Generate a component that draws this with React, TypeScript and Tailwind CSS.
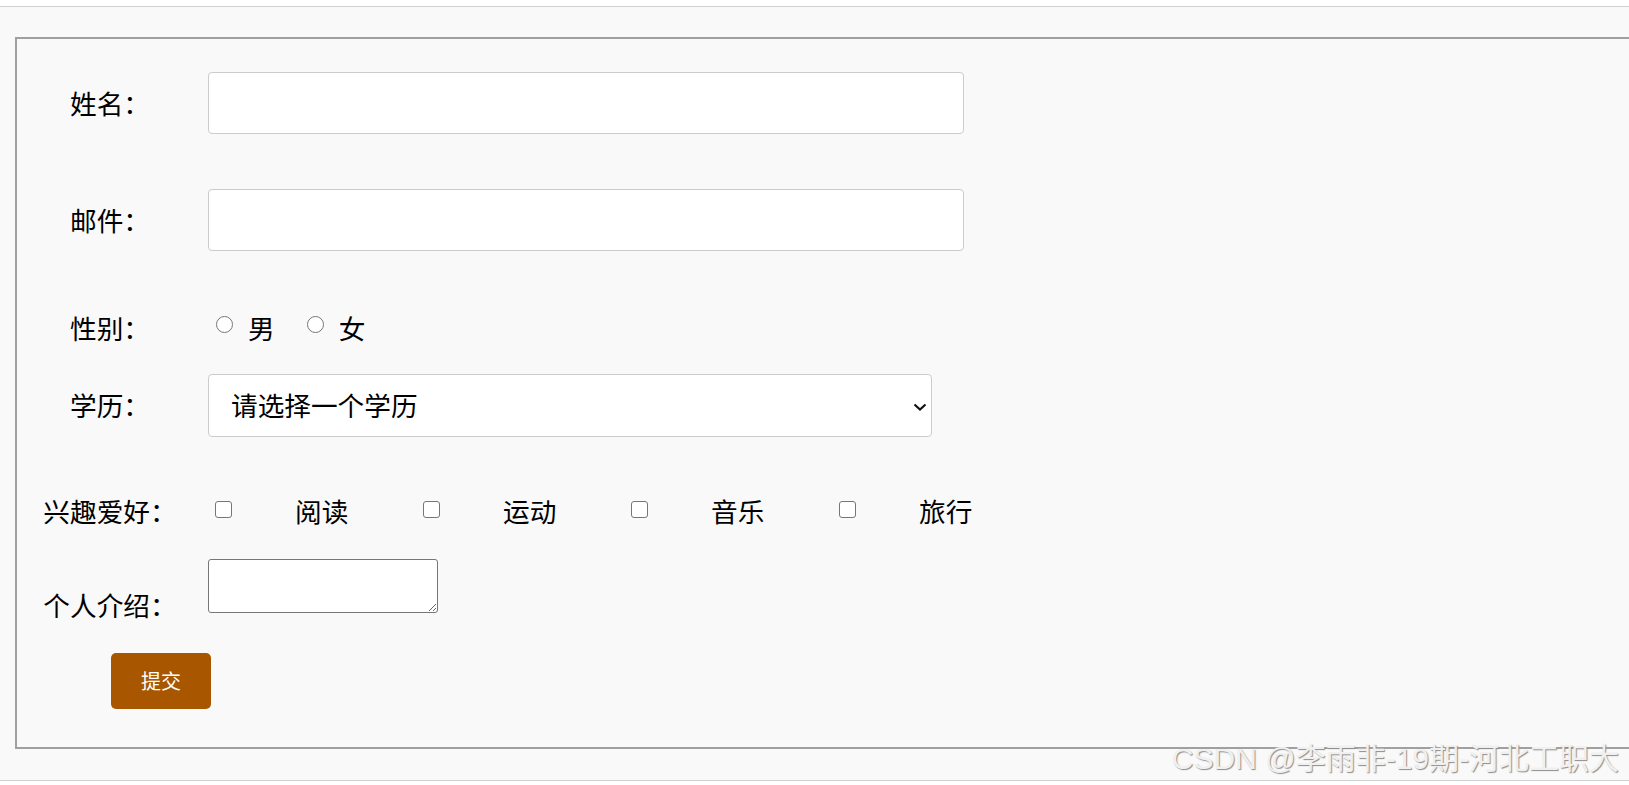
import React from "react";

const font = { fontFamily: '"Noto Sans CJK SC", "Noto Sans", sans-serif' };

function Label({ children }: { children: React.ReactNode }) {
  return (
    <div className="w-[186px] shrink-0 text-center text-[26.67px] leading-none text-black">
      {children}
    </div>
  );
}

function Radio({ text }: { text: string }) {
  return (
    <label className="flex items-center">
      <span className="mb-[6px] block h-[17px] w-[17px] rounded-full border border-[#767676] bg-white" />
      <span className="ml-[15px] text-[26.67px] leading-none text-black">{text}</span>
    </label>
  );
}

function Check({ text }: { text: string }) {
  return (
    <label className="flex w-[208px] shrink-0 items-center">
      <span className="ml-[7px] mb-[2px] block h-[17px] w-[17px] rounded-[3px] border border-[#767676] bg-white" />
      <span className="ml-[63px] text-[26.67px] leading-none text-black">{text}</span>
    </label>
  );
}

export default function App() {
  return (
    <div className="relative h-[785px] w-full overflow-hidden bg-white pt-[6px]" style={font}>
      <div className="h-[775px] border-y border-[#d0d0d0] bg-[#f9f9f9]">
        <form className="ml-[15px] mt-[30px] h-[712px] w-[1640px] border-2 border-[#a0a0a0] pt-[33px]">
          <div className="flex h-[62px] items-center">
            <Label>姓名：</Label>
            <input className="ml-[5px] h-[62px] w-[756px] rounded-[4px] border border-[#cccccc] bg-white" />
          </div>
          <div className="mt-[55px] flex h-[62px] items-center">
            <Label>邮件：</Label>
            <input className="ml-[5px] h-[62px] w-[756px] rounded-[4px] border border-[#cccccc] bg-white" />
          </div>
          <div className="mt-[53px] flex h-[48px] items-center">
            <Label>性别：</Label>
            <div className="ml-[13px] flex items-center gap-[32px]">
              <Radio text="男" />
              <Radio text="女" />
            </div>
          </div>
          <div className="mt-[22px] flex h-[63px] items-center">
            <Label>学历：</Label>
            <div className="relative ml-[5px]">
              <div className="flex h-[63px] w-[724px] items-center rounded-[4px] border border-[#cccccc] bg-white pl-[22px] text-[26.67px] leading-none text-black">
                请选择一个学历
              </div>
              <svg className="absolute right-[5px] top-[29px]" width="14" height="8" viewBox="0 0 14 8">
                <path d="M1.5 1.5 L7 6.5 L12.5 1.5" fill="none" stroke="#111" strokeWidth="2.2" />
              </svg>
            </div>
          </div>
          <div className="mt-[53px] flex h-[42px] items-center">
            <Label>兴趣爱好：</Label>
            <div className="ml-[5px] flex items-center">
              <Check text="阅读" />
              <Check text="运动" />
              <Check text="音乐" />
              <Check text="旅行" />
            </div>
          </div>
          <div className="mt-[27px] flex items-end">
            <div className="mb-[-6px]">
              <Label>个人介绍：</Label>
            </div>
            <textarea className="ml-[5px] block h-[54px] w-[230px] rounded-[3px] border border-[#767676] bg-white" />
          </div>
          <button
            type="button"
            className="ml-[94px] mt-[40px] block h-[56px] w-[100px] rounded-[5px] bg-[#a85600] text-[20px] leading-none text-white"
          >
            提交
          </button>
        </form>
      </div>
      <div className="absolute right-[10px] top-[741px] whitespace-nowrap text-[30px] leading-none text-[#f0f0f0] [text-shadow:1px_1px_1px_#8c8c8c]">
        <span style={{ fontFamily: '"Liberation Sans", "Noto Sans CJK SC", sans-serif' }}>CSDN @李雨非-19期-河北工职大</span>
      </div>
    </div>
  );
}
